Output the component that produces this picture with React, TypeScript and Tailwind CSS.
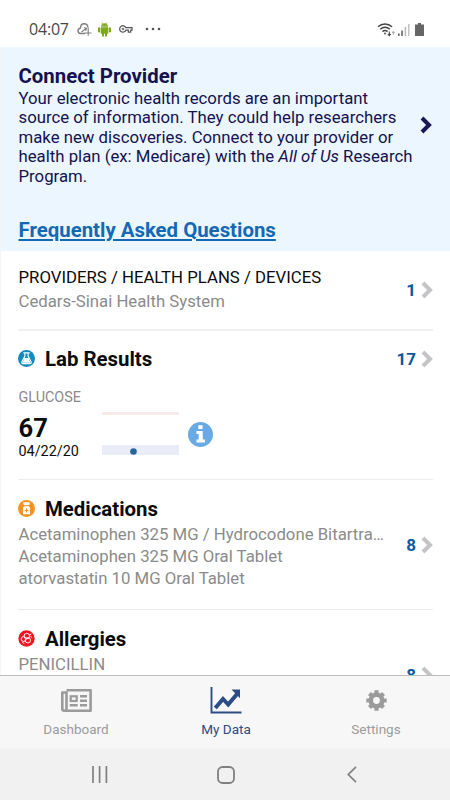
import type { ReactNode } from "react";

interface CountProps {
  count: number;
}

interface TabProps {
  label: string;
  active?: boolean;
  children: ReactNode;
}

const medications = [
  "Acetaminophen 325 MG / Hydrocodone Bitartra…",
  "Acetaminophen 325 MG Oral Tablet",
  "atorvastatin 10 MG Oral Tablet",
];

function Chevron({ className }: { className: string }) {
  return (
    <svg width="12" height="18" viewBox="0 0 12 18" fill="none" className={className}>
      <path d="M2 2 L9 9 L2 16" stroke="currentColor" strokeWidth="4" />
    </svg>
  );
}

function Count({ count }: CountProps) {
  return (
    <div className="flex shrink-0 items-center gap-[5px]">
      <span className="text-[17px] leading-5 font-bold text-[#0b5a9e]">{count}</span>
      <Chevron className="text-[#c4c4c6]" />
    </div>
  );
}

function StatusBar() {
  return (
    <header className="flex h-[47px] shrink-0 items-center justify-between pt-[11px] pr-[26px] pl-[29px]">
      <div className="flex items-center">
        <span className="w-[47px] font-['Open_Sans',sans-serif] text-[16px] leading-5 tracking-[-0.2px] text-[#484848]">
          04:07
        </span>
        {/* cloud */}
        <svg width="15" height="15" viewBox="0 0 15 15" fill="none" stroke="#808080" className="ml-px">
          <path d="M8 11.500H3.600C1.800 11.500 1 10.300 1 8.800 1 7.300 2 6.300 3.300 6.200 3.500 3.300 5 1.700 7.200 1.700c2 0 3.500 1.300 3.700 3.700" strokeWidth="1.400" />
          <path d="M11.200 5.500v8.300M7.700 11h6.800M4.500 10l4.500-3.500M7 5.500l2.500.8-.8 2.500" strokeWidth="1.100" />
        </svg>
        {/* android robot */}
        <svg width="13" height="15" viewBox="0 0 13 15" fill="#7eaa16" className="ml-[6px]">
          <path d="M3 4.700C3 2.600 4.500 1.300 6.500 1.300S10 2.600 10 4.700Z" />
          <path d="M3.800.5l1 1.500M9.200.5l-1 1.500" stroke="#7eaa16" strokeWidth=".7" />
          <rect x="2.700" y="5.200" width="7.600" height="6.500" rx=".8" />
          <rect x="0" y="5.200" width="2.100" height="5.200" rx="1" />
          <rect x="10.900" y="5.200" width="2.100" height="5.200" rx="1" />
          <rect x="4" y="10" width="2" height="4.700" rx=".9" />
          <rect x="7" y="10" width="2" height="4.700" rx=".9" />
          <circle cx="5" cy="3.300" r=".45" fill="#fff" />
          <circle cx="8" cy="3.300" r=".45" fill="#fff" />
        </svg>
        {/* vpn key */}
        <svg width="14" height="8" viewBox="0 0 14 8" fill="none" stroke="#555" className="ml-[8px]">
          <path d="M6.800 2.600H13v2.600h-1.300v2H9.300v-2H6.800A3.200 3.200 0 1 1 6.800 2.600Z" strokeWidth="1.200" />
          <circle cx="4" cy="4" r=".9" strokeWidth=".9" />
        </svg>
        <svg width="16" height="4" viewBox="0 0 16 4" fill="#555" className="ml-[12px]">
          <circle cx="2" cy="2" r="1.300" />
          <circle cx="8" cy="2" r="1.300" />
          <circle cx="14" cy="2" r="1.300" />
        </svg>
      </div>
      <div className="flex items-center">
        <svg width="18" height="15" viewBox="0 0 18 15" fill="none" stroke="#444">
          <path d="M1 4.800C5 1 11 1 15 4.800M3.200 7.300c2.900-2.600 6.700-2.600 9.600 0M5.500 9.600c1.600-1.300 3.400-1.300 5 0" strokeWidth="1.400" />
          <circle cx="8" cy="11.500" r=".9" fill="#444" stroke="none" />
          <path d="M12.300 9.500v4M10.800 12l1.500 1.700 1.500-1.700" strokeWidth="1.100" />
          <path d="M16.300 13V9.500M15 11l1.300-1.500 1.300 1.500" stroke="#aaa" />
        </svg>
        <svg width="13" height="13" viewBox="0 0 13 13" className="ml-[3px]">
          <rect x="0" y="10.500" width="1.600" height="2.500" fill="#666" />
          <rect x="3.200" y="7.500" width="1.600" height="5.500" fill="#666" />
          <rect x="6.600" y="4" width="1.500" height="9" fill="#bbb" />
          <rect x="10" y="1" width="1.500" height="12" fill="#c4c4c4" />
        </svg>
        <svg width="9" height="13" viewBox="0 0 9 13" fill="#666" className="ml-[4px]">
          <path d="M3 0h3v1.500h3V13H0V1.500h3Z" />
        </svg>
      </div>
    </header>
  );
}

function ConnectProvider() {
  return (
    <section className="h-[204px] shrink-0 bg-[#ebf6fe] pt-[17px] pr-[17px] pl-[17.5px]">
      <div className="flex items-center">
        <div className="w-[401.5px] shrink-0 text-[#14124f]">
          <h1 className="text-[20.4px] leading-6 font-bold">Connect Provider</h1>
          <p className="pt-[0.5px] text-[16.75px] leading-[19.6px] whitespace-nowrap">
            Your electronic health records are an important
            <br />
            source of information. They could help researchers
            <br />
            make new discoveries. Connect to your provider or
            <br />
            health plan (ex: Medicare) with the <em>All of Us</em> Research
            <br />
            Program.
          </p>
        </div>
        <Chevron className="shrink-0 text-[#1a1858]" />
      </div>
      <a className="mt-[31.5px] block text-[20.4px] leading-6 font-bold text-[#1469b5] underline decoration-2 underline-offset-2">
        Frequently Asked Questions
      </a>
    </section>
  );
}

function LabResults() {
  return (
    <section className="h-[149px] border-b border-[#ededed] pt-[16px]">
      <div className="flex items-center justify-between">
        <div className="flex items-center gap-[10px]">
          <svg width="17" height="17" viewBox="0 0 16 16" className="-mt-px">
            <circle cx="8" cy="8" r="8" fill="#138bbd" />
            <path d="M5 2.700h6M6.500 2.500v3.200L3.700 11c-.5 1.200 0 1.800 1 1.800h6.600c1 0 1.500-.6 1-1.800L9.500 5.700V2.500" fill="none" stroke="#fff" />
            <path d="M6 7.500h4l1.800 4.500H4.200Z" fill="#fff" />
          </svg>
          <h2 className="text-[20.4px] leading-6 font-bold">Lab Results</h2>
        </div>
        <Count count={17} />
      </div>
      <div className="mt-[18px] pl-[0.5px] text-[14.4px] leading-[18px] text-[#8a8a8a]">GLUCOSE</div>
      <div className="flex">
        <div className="w-[84px] pt-[7px] pl-[0.5px]">
          <div className="text-[25.5px] leading-[29px] font-bold">67</div>
          <div className="text-[14.4px] leading-[18px]">04/22/20</div>
        </div>
        <svg width="77" height="44" viewBox="0 0 77 44" className="mt-[5px]">
          <rect width="77" height="3" fill="#f9eaea" />
          <rect y="33" width="77" height="10" fill="#eaecf8" />
          <circle cx="31.500" cy="39.500" r="3.300" fill="#25679c" />
        </svg>
        <svg width="25" height="25" viewBox="0 0 25 25" className="mt-[15px] ml-[9px]">
          <circle cx="12.500" cy="12.500" r="12.500" fill="#6aaae4" />
          <path d="M10.300 3.300h4.300v3.700h-4.300ZM8.500 9h6.200v8.500h2.200v3H8.500v-3h2.200V12H8.500Z" fill="#fff" />
        </svg>
      </div>
    </section>
  );
}

function Medications() {
  return (
    <section className="flex h-[130px] items-center justify-between border-b border-[#e9e9f0]">
      <div className="h-full pt-[17px]">
        <div className="flex items-center gap-[10px]">
          <svg width="17" height="17" viewBox="0 0 16 16" className="-mt-px">
            <circle cx="8" cy="8" r="8" fill="#f7921e" />
            <path d="M5 2h6v2.200l-1.300.6v1l1.600 1V13.500H4.700V6.800l1.600-1v-1L5 4.200Z" fill="#fff" />
            <path d="M8 8v3.600M6.200 9.800h3.600M6 5.300h4" stroke="#f7921e" strokeWidth=".9" />
          </svg>
          <h2 className="text-[20.4px] leading-6 font-bold">Medications</h2>
        </div>
        <div className="mt-[2px] w-[372px] pl-[0.5px] text-[16.75px] leading-[22px] text-[#8b8b8b]">
          {medications.map((name) => (
            <div key={name} className="whitespace-nowrap">
              {name}
            </div>
          ))}
        </div>
      </div>
      <Count count={8} />
    </section>
  );
}

function Allergies() {
  return (
    <section className="flex h-[129px] shrink-0 items-center justify-between">
      <div className="h-full pt-[17px]">
        <div className="flex items-center gap-[10px]">
          <svg width="17" height="17" viewBox="0 0 16 16" fill="none" stroke="#fff" className="-mt-px">
            <circle cx="8" cy="8" r="7.700" fill="#ee1620" stroke="none" />
            <g strokeWidth=".9">
              <circle cx="5.300" cy="8.500" r="2.300" />
              <circle cx="8.300" cy="5.700" r="2.600" />
              <circle cx="9.300" cy="9.700" r="2.500" />
              <path d="M10.500 5l2-1.300M12 5.800l1 1.500M4 11.500l2 1.500" />
            </g>
          </svg>
          <h2 className="text-[20.4px] leading-6 font-bold">Allergies</h2>
        </div>
        <div className="mt-[2px] pl-[0.5px] text-[16.75px] leading-[22px] text-[#8b8b8b]">PENICILLIN</div>
      </div>
      <Count count={8} />
    </section>
  );
}

function Tab({ label, active, children }: TabProps) {
  return (
    <button
      className={
        active
          ? "flex w-[150px] flex-col items-center text-[#2c4c86]"
          : "flex w-[150px] flex-col items-center text-[#9b9b9b]"
      }
    >
      <span className="flex h-[31px] items-center">{children}</span>
      <span className="mt-[4px] text-[13.5px] leading-[18px]">{label}</span>
    </button>
  );
}

function TabBar() {
  return (
    <nav className="flex h-[73px] shrink-0 border-t border-[#bdbdbd] bg-[#f7f7f7] pt-[9px] pl-px *:shrink-0">
      <Tab label="Dashboard">
        <svg width="31" height="24" viewBox="0 0 31 24" fill="none" stroke="currentColor">
          <path d="M5.500 1.300H29.600V21.700H3.200C1.800 21.700 1.300 21 1.300 19.800V3.500H5.500V19.500C5.500 21 4.700 21.700 3.200 21.700" strokeWidth="2.600" strokeLinejoin="round" />
          <rect x="9.700" y="7.300" width="6" height="4.700" strokeWidth="2.200" />
          <path d="M8.700 16.300h8M19 7.300h7M19 11.800h7M19 16.300h7" strokeWidth="2.400" />
        </svg>
      </Tab>
      <Tab label="My Data" active>
        <svg width="32" height="27" viewBox="0 0 31 27" fill="none" stroke="currentColor">
          <path d="M1 0V25.500H31" strokeWidth="1.900" />
          <path d="M4.800 21L12.500 12l5.200 5.500L27 6.500" strokeWidth="4" />
          <path d="M21 2.500h8.500v8.700Z" fill="currentColor" stroke="none" />
        </svg>
      </Tab>
      <Tab label="Settings">
        <svg width="21" height="21" viewBox="0 0 21 21" fill="none" stroke="currentColor">
          <circle cx="10.500" cy="10.500" r="5.700" strokeWidth="4.600" />
          <path d="M10.500 .3v4M10.500 16.700v4M.3 10.500h4M16.700 10.500h4M3.500 3.500l2.500 2.500M15 15l2.500 2.500M17.500 3.500l-2.500 2.500M6 15l-2.500 2.500" strokeWidth="4.200" />
        </svg>
      </Tab>
    </nav>
  );
}

function SystemNav() {
  return (
    <div className="flex h-[52px] shrink-0 items-center justify-between border-t border-[#f4f4f4] bg-[#f1f1f1] pr-[93px] pl-[92px] text-[#808080]">
      <svg width="16" height="17" viewBox="0 0 16 17" stroke="currentColor" strokeWidth="1.700">
        <path d="M1 0v17M7.600 0v17M14.400 0v17" />
      </svg>
      <svg width="18" height="18" viewBox="0 0 18 18" fill="none" stroke="currentColor" className="-ml-[4px]">
        <rect x="1" y="1" width="16" height="16" rx="4.500" strokeWidth="1.800" />
      </svg>
      <svg width="10" height="17" viewBox="0 0 10 17" fill="none" stroke="currentColor">
        <path d="M9 .8L1.300 8.500 9 16.200" strokeWidth="1.700" />
      </svg>
    </div>
  );
}

export default function App() {
  return (
    <div className="flex h-[800px] w-[450px] flex-col overflow-hidden bg-white font-[Roboto,sans-serif] text-[#0b0b0b]">
      <StatusBar />
      <main className="flex h-[628px] shrink-0 flex-col overflow-hidden border-l border-[#f5f5f5]">
        <ConnectProvider />
        <div className="pr-[17px] pl-[17px]">
          <section className="flex h-[80px] items-center justify-between border-b-2 border-[#f0f0f0]">
            <div className="pl-[0.5px]">
              <div className="-mt-px text-[16.75px] leading-[24px]">PROVIDERS / HEALTH PLANS / DEVICES</div>
              <div className="text-[16.75px] leading-[25px] text-[#8b8b8b]">Cedars-Sinai Health System</div>
            </div>
            <Count count={1} />
          </section>
          <LabResults />
          <Medications />
          <Allergies />
        </div>
      </main>
      <TabBar />
      <SystemNav />
    </div>
  );
}
